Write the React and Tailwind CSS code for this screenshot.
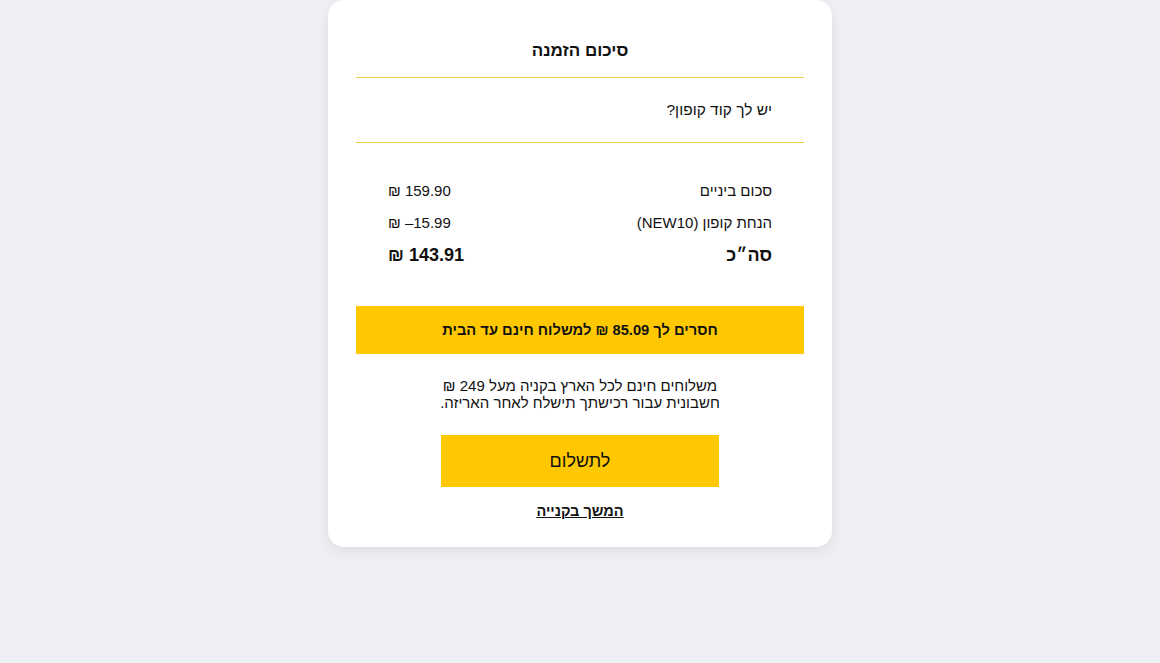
export default function App() {
  return (
    <div
      dir="rtl"
      className="min-h-screen bg-[#eff0f4] flex justify-center text-[#111] font-['Liberation_Sans','Open_Sans',sans-serif]"
    >
      <div className="w-[504px] h-[547px] bg-white rounded-2xl shadow-[0_4px_14px_rgba(0,0,0,0.08)] px-7 pt-[38px]">
        {/* Header */}
        <h2 className="text-center text-[17px] font-bold h-[39px] leading-[26px]">סיכום הזמנה</h2>
        <div className="h-px bg-[#f2cd3c]" />

        {/* Coupon */}
        <div className="px-8 h-[64px] flex items-center text-[15.5px]">יש לך קוד קופון?</div>
        <div className="h-px bg-[#f2cd3c]" />

        {/* Totals */}
        <div className="px-8 pt-[36px] flex flex-col">
          <div className="flex justify-between text-[15px] leading-[24px]">
            <span>סכום ביניים</span>
            <span dir="ltr">₪ 159.90</span>
          </div>
          <div className="flex justify-between text-[15px] leading-[24px] mt-2">
            <span>
              הנחת קופון <bdi dir="ltr">(NEW10)</bdi>
            </span>
            <span dir="ltr">₪ –15.99</span>
          </div>
          <div className="flex justify-between text-[18px] font-bold leading-[28px] mt-1.5">
            <span>סה״כ</span>
            <span dir="ltr">₪ 143.91</span>
          </div>
        </div>

        {/* Free shipping banner */}
        <div className="mt-[37px] h-12 bg-[#ffc800] flex items-center justify-center text-[14.7px] font-bold">
          חסרים לך 85.09 ₪ למשלוח חינם עד הבית
        </div>

        <div className="mt-[23px] text-center text-[15px] leading-[17px]">
          <div>משלוחים חינם לכל הארץ בקניה מעל 249 ₪</div>
          <div>חשבונית עבור רכישתך תישלח לאחר האריזה.</div>
        </div>

        <div className="flex justify-center mt-[24px]">
          <button className="w-[278px] h-[52px] bg-[#ffc800] text-[18px]">לתשלום</button>
        </div>

        <div className="text-center mt-[12px]">
          <a href="#" className="text-[14.5px] font-bold underline">
            המשך בקנייה
          </a>
        </div>
      </div>
    </div>
  );
}
